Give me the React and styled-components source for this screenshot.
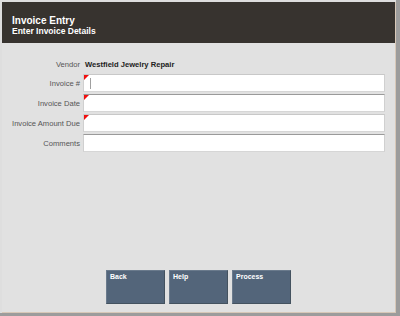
import React from 'react';
import styled, { createGlobalStyle } from 'styled-components';

const GlobalStyle = createGlobalStyle`
  html, body {
    margin: 0;
    padding: 0;
    background: #9c9c9c;
  }
  body {
    font-family: "Liberation Sans", Arial, sans-serif;
  }
`;

const Frame = styled.div`
  width: 396px;
  height: 313px;
  background: #dedede;
  padding: 2px 0 0 2px;
  box-sizing: border-box;
`;

const Screen = styled.div`
  height: 100%;
  display: flex;
  flex-direction: column;
  background: #e1e1e1;
  border-right: 1px solid #d8c8b8;
  border-bottom: 1px solid #d8c8b8;
  box-sizing: border-box;
`;

const Header = styled.header`
  height: 41px;
  background: #37332f;
  color: #ffffff;
  padding: 13px 0 0 10px;
  box-sizing: border-box;
  font-weight: 700;
`;

const Title = styled.div`
  font-size: 10px;
  line-height: 11px;
`;

const Subtitle = styled.div`
  font-size: 8.5px;
  line-height: 10px;
`;

const Form = styled.div`
  display: grid;
  grid-template-columns: 81px 302px;
  grid-template-rows: 15px;
  grid-auto-rows: 18px;
  row-gap: 2px;
  padding: 14px 0 0 0;
  align-items: center;
`;

const Label = styled.div`
  font-size: 7.6px;
  color: #555555;
  text-align: right;
  padding-right: 3px;
  white-space: nowrap;
`;

const Value = styled.div`
  font-size: 7.6px;
  font-weight: 700;
  color: #222222;
  padding-left: 2px;
`;

const Field = styled.div`
  position: relative;
  height: 18px;
  background: #ffffff;
  border-top: 1px solid ${(p) => (p.$dark ? '#9a9a9a' : '#c8c8c8')};
  border-left: 1px solid #d0d0d0;
  border-right: 1px solid #d0d0d0;
  border-bottom: 1px solid #d6d6d6;
  box-sizing: border-box;
`;

const Required = styled.span`
  position: absolute;
  top: 0;
  left: 0;
  width: 0;
  height: 0;
  border-top: 5px solid #f01010;
  border-right: 5px solid transparent;
`;

const Caret = styled.span`
  position: absolute;
  left: 6px;
  top: 3px;
  width: 1px;
  height: 11px;
  background: #a0a0a0;
`;

const Spacer = styled.div`
  flex: 1;
`;

const ButtonBar = styled.div`
  display: flex;
  justify-content: center;
  gap: 4px;
  padding-bottom: 8px;
`;

const Button = styled.button`
  width: 59px;
  height: 34px;
  background: #53657a;
  border: 1px solid #6a7a8c;
  border-bottom-color: #44525f;
  border-right-color: #44525f;
  color: #ffffff;
  font-family: "Liberation Sans", Arial, sans-serif;
  font-size: 7px;
  font-weight: 700;
  text-align: left;
  padding: 2px 3px;
  display: flex;
  align-items: flex-start;
`;

const fields = [
  { label: 'Invoice #', required: true, caret: true, dark: false },
  { label: 'Invoice Date', required: true, dark: true },
  { label: 'Invoice Amount Due', required: true, dark: false },
  { label: 'Comments', required: false, dark: true },
];

export default function App() {
  return (
    <>
      <GlobalStyle />
      <Frame>
        <Screen>
          <Header>
            <Title>Invoice Entry</Title>
            <Subtitle>Enter Invoice Details</Subtitle>
          </Header>
          <Form>
            <Label>Vendor</Label>
            <Value>Westfield Jewelry Repair</Value>
            {fields.map((f) => (
              <React.Fragment key={f.label}>
                <Label>{f.label}</Label>
                <Field $dark={f.dark}>
                  {f.required && <Required />}
                  {f.caret && <Caret />}
                </Field>
              </React.Fragment>
            ))}
          </Form>
          <Spacer />
          <ButtonBar>
            <Button>Back</Button>
            <Button>Help</Button>
            <Button>Process</Button>
          </ButtonBar>
        </Screen>
      </Frame>
    </>
  );
}
